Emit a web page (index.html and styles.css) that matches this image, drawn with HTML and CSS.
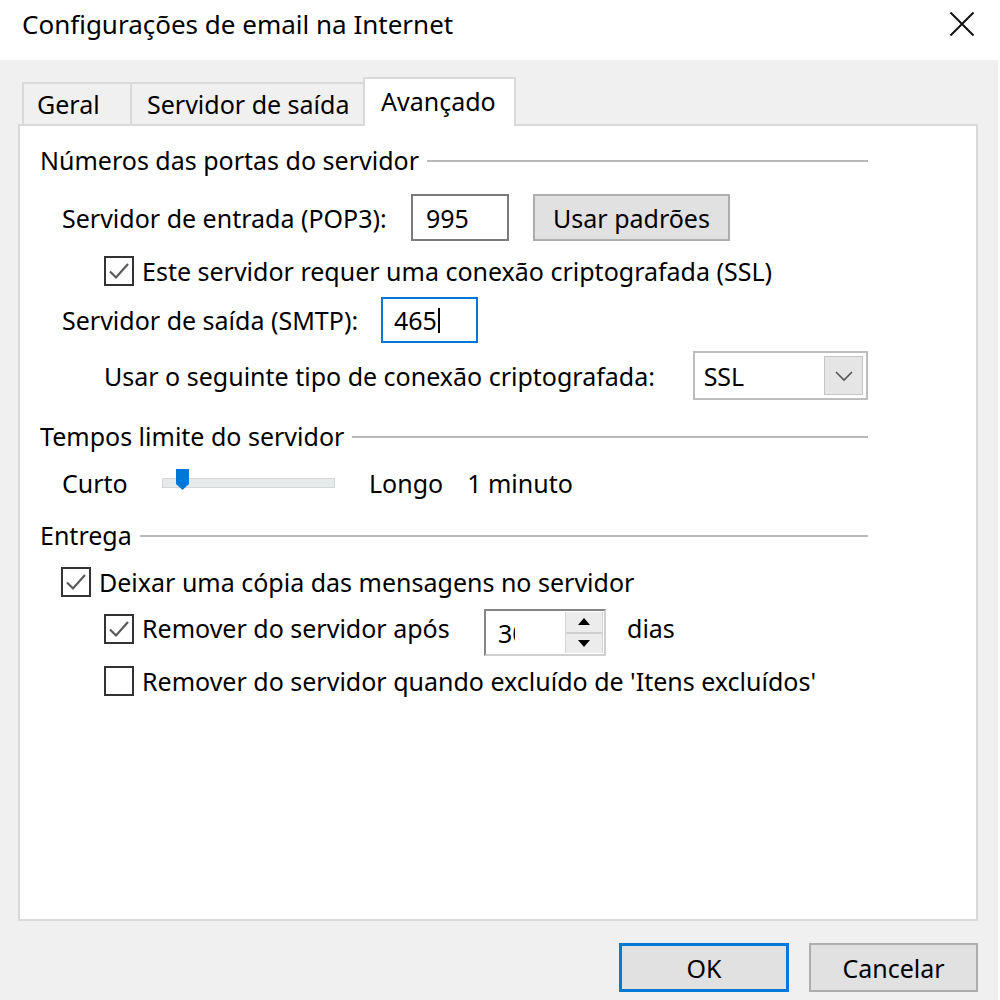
FILE: index.html
```html
<!DOCTYPE html>
<html lang="pt-BR">
<head>
<meta charset="utf-8">
<title>Configurações de email na Internet</title>
<link rel="stylesheet" href="styles.css">
</head>
<body>
<div class="window">
  <div class="titlebar">
    <span class="title">Configurações de email na Internet</span>
    <svg class="close" width="26" height="26" viewBox="0 0 26 26"><path d="M1.5 1.5 L24.5 24.5 M24.5 1.5 L1.5 24.5" stroke="#111" stroke-width="2" fill="none"/></svg>
  </div>
  <div class="client">
    <div class="tabs">
      <div class="tab tab-geral">Geral</div>
      <div class="tab tab-saida">Servidor de saída</div>
      <div class="tab tab-avancado active">Avançado</div>
    </div>
    <div class="panel">
      <div class="legend legend-portas"><span>Números das portas do servidor</span><i class="rule"></i></div>

      <div class="row row-pop indent1">
        <span class="label label-pop">Servidor de entrada (POP3):</span>
        <div class="field field-pop">995</div>
        <div class="btn btn-defaults">Usar padrões</div>
      </div>

      <div class="row row-ssl indent2 check-row">
        <span class="checkbox checked"><svg width="26" height="26" viewBox="0 0 26 26"><path d="M4 13.5 L10 19.5 L22 6" stroke="#5a5a5a" stroke-width="2.2" fill="none"/></svg></span>
        <span class="label">Este servidor requer uma conexão criptografada (SSL)</span>
      </div>

      <div class="row row-smtp indent1">
        <span class="label label-smtp">Servidor de saída (SMTP):</span>
        <div class="field field-smtp focused">465<i class="caret"></i></div>
      </div>

      <div class="row row-enc indent2">
        <span class="label label-enc">Usar o seguinte tipo de conexão criptografada:</span>
        <div class="select">
          <span class="select-value">SSL</span>
          <span class="select-arrow"><svg width="20" height="12" viewBox="0 0 20 12"><path d="M2 2 L10 10 L18 2" stroke="#555" stroke-width="1.6" fill="none"/></svg></span>
        </div>
      </div>

      <div class="legend legend-tempos"><span>Tempos limite do servidor</span><i class="rule"></i></div>

      <div class="row row-slider indent1">
        <span class="label label-curto">Curto</span>
        <div class="slider">
          <div class="track"></div>
          <svg class="thumb" width="13" height="21" viewBox="0 0 13 21"><path d="M0 0 H13 V15 L6.5 21 L0 15 Z" fill="#0078d7"/></svg>
        </div>
        <span class="label label-longo">Longo</span>
        <span class="label">1 minuto</span>
      </div>

      <div class="legend legend-entrega"><span>Entrega</span><i class="rule"></i></div>

      <div class="row row-deixar check-row">
        <span class="checkbox checked"><svg width="26" height="26" viewBox="0 0 26 26"><path d="M4 13.5 L10 19.5 L22 6" stroke="#5a5a5a" stroke-width="2.2" fill="none"/></svg></span>
        <span class="label">Deixar uma cópia das mensagens no servidor</span>
      </div>

      <div class="row row-remover indent2 check-row">
        <span class="checkbox checked"><svg width="26" height="26" viewBox="0 0 26 26"><path d="M4 13.5 L10 19.5 L22 6" stroke="#5a5a5a" stroke-width="2.2" fill="none"/></svg></span>
        <span class="label label-apos">Remover do servidor após</span>
        <div class="spin">
          <span class="spin-text"><span class="spin-clip">30</span></span>
          <span class="spin-buttons">
            <span class="spin-up"><svg width="14" height="8" viewBox="0 0 14 8"><path d="M7 0 L13 7 H1 Z" fill="#000"/></svg></span>
            <span class="spin-down"><svg width="14" height="8" viewBox="0 0 14 8"><path d="M1 1 H13 L7 8 Z" fill="#000"/></svg></span>
          </span>
        </div>
        <span class="label label-dias">dias</span>
      </div>

      <div class="row row-excluidos indent2 check-row">
        <span class="checkbox"></span>
        <span class="label">Remover do servidor quando excluído de 'Itens excluídos'</span>
      </div>
    </div>
    <div class="buttons">
      <div class="btn btn-ok">OK</div>
      <div class="btn btn-cancel">Cancelar</div>
    </div>
  </div>
</div>
</body>
</html>
```

FILE: styles.css
```css
* { box-sizing: border-box; }
html, body { margin: 0; padding: 0; }
body {
  width: 1000px;
  height: 1000px;
  overflow: hidden;
  font-family: "Noto Sans", "Open Sans", "DejaVu Sans", sans-serif;
  font-size: 25px;
  color: #000;
  background: #f0f0f0;
}
.window {
  width: 1000px;
  height: 1000px;
  display: flex;
  flex-direction: column;
}
.titlebar {
  height: 60px;
  flex: none;
  background: #fff;
  display: flex;
  align-items: center;
  justify-content: space-between;
  padding: 0 25px 12px 22px;
}
.title { font-size: 26px; line-height: 32px; }
.close { display: block; }

.client {
  flex: 1;
  display: flex;
  flex-direction: column;
  background: #f0f0f0;
  padding: 17px 20px 8px 18px;
  border-right: 2px solid #fff;
}
.tabs {
  height: 49px;
  margin-bottom: -2px;
  display: flex;
  align-items: flex-end;
  padding-left: 4px;
  position: relative;
  z-index: 1;
}
.tab {
  height: 42px;
  margin-bottom: 2px;
  border: 2px solid #d9d9d9;
  border-bottom: none;
  background: #f0f0f0;
  display: flex;
  align-items: center;
  line-height: 30px;
  white-space: nowrap;
}
.tab-geral { width: 110px; padding-left: 13px; }
.tab-saida { width: 235px; margin-left: -2px; padding-left: 15px; }
.tab-avancado { width: 153px; margin-left: -2px; padding-left: 16px; }
.tab.active {
  height: 49px;
  margin-bottom: 0;
  background: #fff;
  padding-bottom: 4px;
}

.panel {
  flex: 1;
  background: #fff;
  border: 2px solid #d9d9d9;
  padding: 19px 108px 0 20px;
  display: flex;
  flex-direction: column;
}
.legend {
  height: 30px;
  display: flex;
  align-items: center;
  line-height: 30px;
  white-space: nowrap;
}
.legend .rule {
  flex: 1;
  height: 2px;
  background: #b9b9b9;
  margin-left: 8px;
  margin-top: 1px;
}
.row {
  display: flex;
  align-items: center;
  line-height: 30px;
}
.indent1 { padding-left: 22px; }
.indent2 { padding-left: 64px; }
.label { white-space: nowrap; }

.row-pop { height: 47px; margin-top: 19px; }
.label-pop { width: 349px; }
.field {
  height: 100%;
  background: #fff;
  border: 2px solid #7a7a7a;
  display: flex;
  align-items: center;
  padding-left: 13px;
}
.field-pop { width: 98px; }
.btn {
  display: flex;
  align-items: center;
  justify-content: center;
  background: #e1e1e1;
  border: 2px solid #adadad;
  line-height: 30px;
}
.btn-defaults { width: 197px; height: 47px; margin-left: 24px; }

.check-row { height: 30px; }
.checkbox {
  flex: none;
  width: 30px;
  height: 30px;
  border: 2px solid #333;
  background: #fff;
  margin-right: 8px;
  display: flex;
  align-items: center;
  justify-content: center;
}
.checkbox svg { display: block; }
.row-ssl { margin-top: 15px; }

.row-smtp { height: 46px; margin-top: 11px; }
.label-smtp { width: 319px; }
.field-smtp { width: 97px; padding-left: 11px; }
.field.focused { border-color: #0078d7; }
.caret {
  display: inline-block;
  width: 2px;
  height: 25px;
  background: #000;
  margin-left: 1px;
}

.row-enc { height: 49px; margin-top: 8px; }
.label-enc { width: 591px; }
.select {
  width: 176px;
  height: 49px;
  border: 2px solid #bdbdbd;
  background: #fff;
  display: flex;
  align-items: center;
  justify-content: space-between;
  padding: 0 3px 0 9px;
}
.select-arrow {
  width: 39px;
  height: 39px;
  background: #e5e5e5;
  border: 1px solid #c4c4c4;
  display: flex;
  align-items: center;
  justify-content: center;
}
.select-arrow svg { display: block; }

.legend-tempos { margin-top: 21px; }
.row-slider { height: 30px; margin-top: 17px; }
.label-curto { width: 100px; }
.slider {
  width: 173px;
  height: 21px;
  display: flex;
  align-items: center;
  position: relative;
}
.track {
  width: 173px;
  height: 10px;
  background: #e7eaea;
  border: 1px solid #d6d6d6;
}
.thumb {
  position: absolute;
  left: 14px;
  top: -4px;
}
.label-longo { margin-left: 34px; margin-right: 24px; }

.legend-entrega { margin-top: 22px; }
.row-deixar { margin-top: 17px; padding-left: 21px; }

.row-remover { height: 47px; margin-top: 12px; align-items: flex-start; }
.row-remover .checkbox { margin-top: 5px; }
.row-remover .label { margin-top: 4px; }
.label-apos { width: 342px; }
.spin {
  width: 122px;
  height: 47px;
  border: 2px solid;
  border-color: #858585 #d0d0d0 #d0d0d0 #858585;
  background: #fff;
  display: flex;
  align-items: stretch;
}
.spin-text {
  flex: 1;
  display: flex;
  align-items: center;
  padding-left: 12px;
}
.spin-clip {
  display: block;
  width: 17px;
  overflow: hidden;
  white-space: nowrap;
}
.spin-buttons {
  width: 38px;
  margin: 1px 1px 1px 0;
  display: flex;
  flex-direction: column;
  background: #ececec;
  border-left: 1px solid #d4d4d4;
  border-right: 1px solid #d4d4d4;
}
.spin-up, .spin-down {
  flex: 1;
  display: flex;
  align-items: center;
  justify-content: center;
}
.spin-up { border-bottom: 2px solid #d0d0d0; }
.spin-up svg, .spin-down svg { display: block; }
.label-dias { margin-left: 21px; }

.row-excluidos { margin-top: 10px; }

.buttons {
  flex: none;
  height: 49px;
  margin-top: 22px;
  display: flex;
  justify-content: flex-end;
  gap: 20px;
}
.btn-ok {
  width: 170px;
  height: 49px;
  border: 3px solid #0078d7;
}
.btn-cancel {
  width: 169px;
  height: 49px;
}
```
